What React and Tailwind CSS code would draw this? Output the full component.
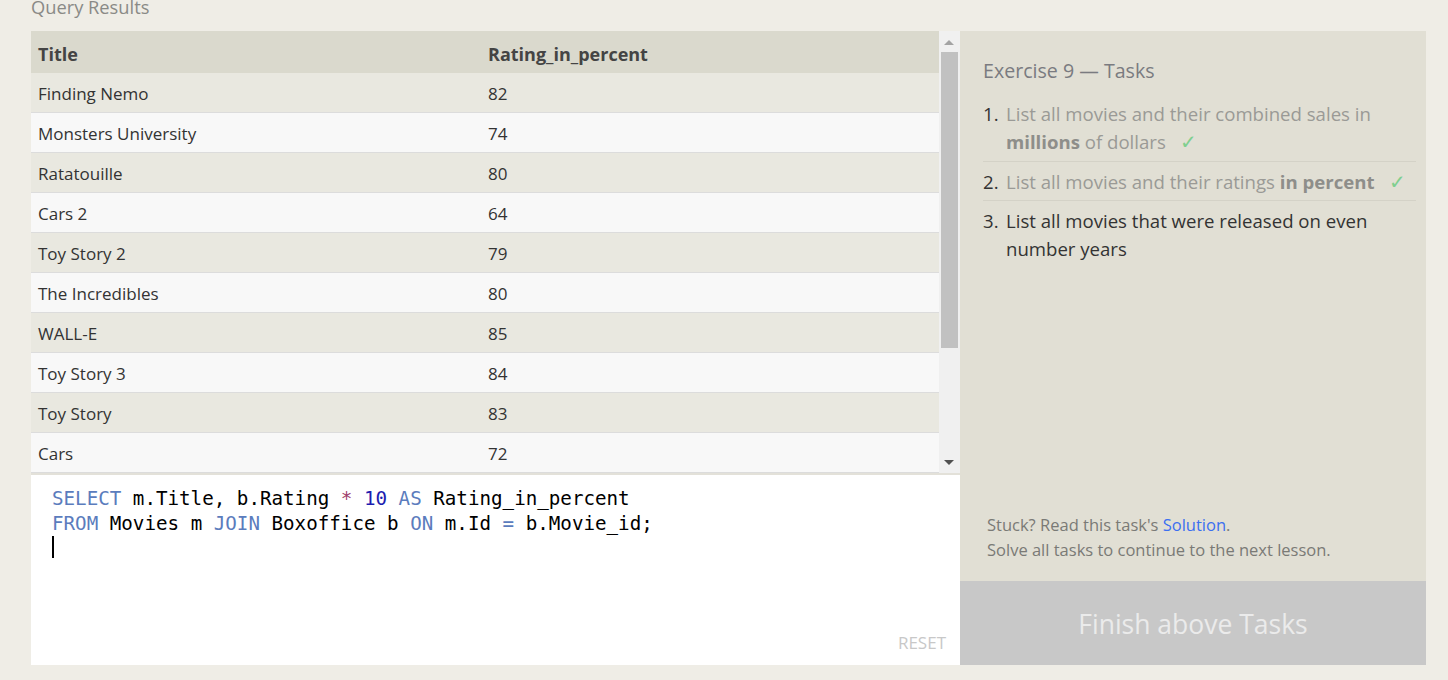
import React from "react";

const rows = [
  ["Finding Nemo", 82],
  ["Monsters University", 74],
  ["Ratatouille", 80],
  ["Cars 2", 64],
  ["Toy Story 2", 79],
  ["The Incredibles", 80],
  ["WALL-E", 85],
  ["Toy Story 3", 84],
  ["Toy Story", 83],
  ["Cars", 72],
];

const KW = ({ children }) => <span className="text-[#5b7cbd]">{children}</span>;

function Check() {
  return <span className="ml-[14px] text-[20px] leading-[20px] text-[#7fcf8f]">✓</span>;
}

export default function App() {
  return (
    <div
      className="w-[1448px] h-[680px] bg-[#efede6] overflow-hidden text-[#333]"
      style={{ fontFamily: '"Open Sans", "Noto Sans", sans-serif' }}
    >
      <div className="h-[31px] overflow-hidden pl-[31px]">
        <div className="-mt-[6px] text-[18.3px] leading-[26px] text-[#8a8a86]">Query Results</div>
      </div>
      <div className="flex h-[634px] pl-[31px]">
        {/* Left panel */}
        <div className="w-[929px] flex flex-col">
          <div className="flex h-[444px] border-b-2 border-[#e3e1d9]">
            <div className="w-[908px] flex flex-col">
              <div className="grid grid-cols-[450px_1fr] h-[42px] pt-[4px] bg-[#dad9cd] items-center font-bold text-[18px] text-[#444]">
                <div className="pl-[7px]">Title</div>
                <div className="pl-[7px]">Rating_in_percent</div>
              </div>
              {rows.map(([t, r], i) => (
                <div
                  key={t}
                  className={
                    "grid grid-cols-[450px_1fr] h-[40px] pt-[2px] items-center border-b border-[#dcdcdc] text-[17px] " +
                    (i % 2 === 0 ? "bg-[#e9e8e0]" : "bg-[#f8f8f8]")
                  }
                >
                  <div className="pl-[7px]">{t}</div>
                  <div className="pl-[7px]">{r}</div>
                </div>
              ))}
            </div>
            <div className="w-[21px] bg-[#f0f0f0] relative">
              <div className="absolute left-[5px] top-[9px] w-0 h-0 border-l-[5px] border-r-[5px] border-b-[5px] border-l-transparent border-r-transparent border-b-[#a3a3a3]" />
              <div className="absolute left-[2px] top-[21px] w-[17px] h-[296px] bg-[#c1c1c1]" />
              <div className="absolute left-[5px] bottom-[8px] w-0 h-0 border-l-[5px] border-r-[5px] border-t-[5px] border-l-transparent border-r-transparent border-t-[#505050]" />
            </div>
          </div>
          <div className="flex-1 bg-white relative pl-[21px] pt-[11px]">
            <div
              className="text-[19.2px] leading-[25px] text-black whitespace-pre"
              style={{ fontFamily: '"DejaVu Sans Mono", "Liberation Mono", monospace' }}
            >
              <div>
                <KW>SELECT</KW> m.Title, b.Rating <span className="text-[#a0406a]">*</span>{" "}
                <span className="text-[#1c1cb0]">10</span> <KW>AS</KW> Rating_in_percent
              </div>
              <div>
                <KW>FROM</KW> Movies m <KW>JOIN</KW> Boxoffice b <KW>ON</KW> m.Id <KW>=</KW> b.Movie_id;
              </div>
              <div className="h-[25px] flex items-start">
                <div className="w-[2px] h-[22px] bg-black" />
              </div>
            </div>
            <div className="absolute right-[14px] bottom-[10px] text-[17px] text-[#c8c8c8]">RESET</div>
          </div>
        </div>
        {/* Right panel */}
        <div className="w-[466px] flex flex-col bg-[#e1dfd4]">
          <div className="flex-1 pl-[23px] pr-[10px] pt-[26px] flex flex-col">
            <div className="text-[19.6px] leading-[28px] text-[#7a7b80]">Exercise 9 — Tasks</div>
            <ol className="mt-[15px] text-[18.6px] leading-[28px]">
              <li className="flex border-b border-[#d4d2c7] pb-[5px]">
                <span className="w-[23px] shrink-0 text-[#333]">1.</span>
                <span className="text-[#9a9a96]">
                  List all movies and their combined sales in <b className="text-[#8e8e8a]">millions</b> of dollars
                  <Check />
                </span>
              </li>
              <li className="flex border-b border-[#d4d2c7] pt-[6px] pb-[4px]">
                <span className="w-[23px] shrink-0 text-[#333]">2.</span>
                <span className="text-[#9a9a96]">
                  List all movies and their ratings <b className="text-[#8e8e8a]">in percent</b>
                  <Check />
                </span>
              </li>
              <li className="flex pt-[6px]">
                <span className="w-[23px] shrink-0 text-[#333]">3.</span>
                <span className="text-[#333]">List all movies that were released on even number years</span>
              </li>
            </ol>
            <div className="mt-auto pb-[19px] pl-[4px] text-[16.5px] leading-[25px] text-[#7a7a76]">
              <div>
                Stuck? Read this task's <span className="text-[#3c6ff0]">Solution</span>.
              </div>
              <div>Solve all tasks to continue to the next lesson.</div>
            </div>
          </div>
          <div className="h-[84px] bg-[#c8c8c8] flex items-center justify-center text-[26.5px] text-[#ebebeb]">
            <span className="mt-[3px]">Finish above Tasks</span>
          </div>
        </div>
      </div>
    </div>
  );
}
